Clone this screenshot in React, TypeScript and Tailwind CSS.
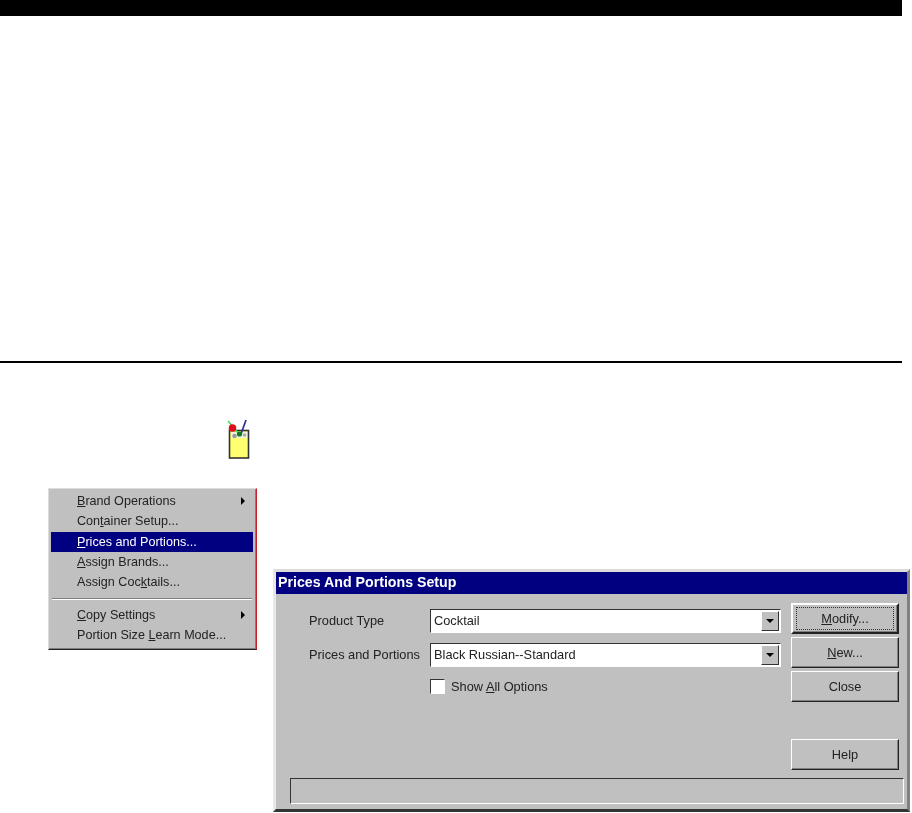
const raisedBtn =
  "flex w-[108px] items-center justify-center bg-[#c0c0c0] border border-t-white border-l-white border-r-[#222] border-b-[#222] shadow-[inset_-1px_-1px_0_#808080] text-[12.8px] text-[#222]";

const GlassIcon = () => (
  <svg width="24" height="40" viewBox="0 0 24 40" className="block overflow-visible">
    <rect x="1.5" y="10.5" width="19" height="27.5" fill="#ffff70" stroke="#333" strokeWidth="1.6" />
    <rect x="3" y="12" width="16" height="6" fill="#f2f2e0" />
    <path d="M0 1 L11 14" stroke="#3ee06a" strokeWidth="1.6" />
    <path d="M18 0 L13 14" stroke="#2b2f9e" strokeWidth="1.7" />
    <circle cx="4.5" cy="8" r="3.8" fill="#e0101a" />
    <circle cx="11.5" cy="14" r="2.6" fill="#0c7a20" />
    <circle cx="6.5" cy="16" r="2.2" fill="#999" />
    <circle cx="16.5" cy="15" r="1.8" fill="#aaa" />
  </svg>
);

const MenuItem = ({ children, arrow, active }: { children: React.ReactNode; arrow?: boolean; active?: boolean }) => (
  <div
    className={`flex h-[20.4px] items-center justify-between pl-[26px] pr-[8px] ${
      active ? "bg-[#000080] text-white" : "text-[#222]"
    }`}
  >
    <span>{children}</span>
    {arrow && <span className="h-0 w-0 border-y-[4px] border-l-[4px] border-y-transparent border-l-black" />}
  </div>
);

const Combo = ({ value }: { value: string }) => (
  <div className="flex h-[24px] w-[351px] items-center border border-t-[#333] border-l-[#333] border-r-white border-b-white bg-white pl-[3px] pr-[1px] text-[12.8px] text-[#222]">
    <span className="flex-1">{value}</span>
    <span className="flex h-[20px] w-[18px] items-center justify-center border border-t-white border-l-white border-r-[#333] border-b-[#333] bg-[#c0c0c0]">
      <span className="h-0 w-0 border-x-[4px] border-t-[4px] border-x-transparent border-t-black" />
    </span>
  </div>
);

export default function App() {
  return (
    <div className="h-[813px] w-[912px] overflow-hidden bg-white font-['Liberation_Sans',Arial,sans-serif]">
      <div className="h-[16px] w-[902px] bg-black" />
      <div className="mt-[345px] h-[2px] w-[902px] bg-black" />

      <div className="flex">
        <div className="ml-[48px] w-[209px] blur-[0.35px]">
          <div className="mb-[28px] ml-[180px] mt-[57px]">
            <GlassIcon />
          </div>
          <div className="h-[162px] w-[209px] border border-t-[#dcdcdc] border-l-[#dcdcdc] border-r-[#c8202a] border-b-[#222] bg-[#c0c0c0] py-[2px] pl-[2px] pr-[3px] text-[12.6px] shadow-[inset_-1px_-1px_0_#808080]">
            <MenuItem arrow>
              <u>B</u>rand Operations
            </MenuItem>
            <MenuItem>
              Con<u>t</u>ainer Setup...
            </MenuItem>
            <MenuItem active>
              <u>P</u>rices and Portions...
            </MenuItem>
            <MenuItem>
              <u>A</u>ssign Brands...
            </MenuItem>
            <MenuItem>
              Assign Coc<u>k</u>tails...
            </MenuItem>
            <div className="mx-[1px] my-[5px] h-[2px] border-t border-t-[#808080] border-b border-b-white" />
            <MenuItem arrow>
              <u>C</u>opy Settings
            </MenuItem>
            <MenuItem>
              Portion Size <u>L</u>earn Mode...
            </MenuItem>
          </div>
        </div>

        <div className="ml-[16px] mt-[206px] h-[243px] w-[637px] border-[3px] border-t-[#dcdcdc] border-l-[#e8e8e8] border-r-[#808080] border-b-[#333] bg-[#c0c0c0] blur-[0.35px]">
          <div className="flex h-[22px] items-center bg-[#000080] pl-[2px] text-[14.2px] font-bold text-white">
            Prices And Portions Setup
          </div>
          <div className="flex">
            <div className="ml-[33px] mt-[15px] w-[481px]">
              <div className="flex items-center">
                <span className="w-[121px] text-[12.8px] text-[#222]">Product Type</span>
                <Combo value="Cocktail" />
              </div>
              <div className="mt-[10px] flex items-center">
                <span className="w-[121px] text-[12.8px] text-[#222]">Prices and Portions</span>
                <Combo value="Black Russian--Standard" />
              </div>
              <div className="ml-[121px] mt-[10px] flex items-center">
                <span className="h-[15px] w-[15px] border border-t-[#333] border-l-[#333] border-r-white border-b-white bg-white" />
                <span className="ml-[6px] text-[12.8px] text-[#222]">
                  Show <u>A</u>ll Options
                </span>
              </div>
            </div>
            <div className="ml-[1px] mt-[9px] flex flex-col">
              <div className={`${raisedBtn} h-[31px] border-2 border-[#222]`}>
                <span className="flex h-[23px] w-[98px] items-center justify-center border border-dotted border-[#333]">
                  <span>
                    <u>M</u>odify...
                  </span>
                </span>
              </div>
              <div className={`${raisedBtn} mt-[3px] h-[31px]`}>
                <span>
                  <u>N</u>ew...
                </span>
              </div>
              <div className={`${raisedBtn} mt-[3px] h-[31px]`}>Close</div>
              <div className={`${raisedBtn} mt-[37px] h-[31px]`}>Help</div>
            </div>
          </div>
          <div className="ml-[14px] mt-[8px] h-[26px] w-[614px] border border-t-[#333] border-l-[#333] border-r-white border-b-white" />
        </div>
      </div>
    </div>
  );
}
